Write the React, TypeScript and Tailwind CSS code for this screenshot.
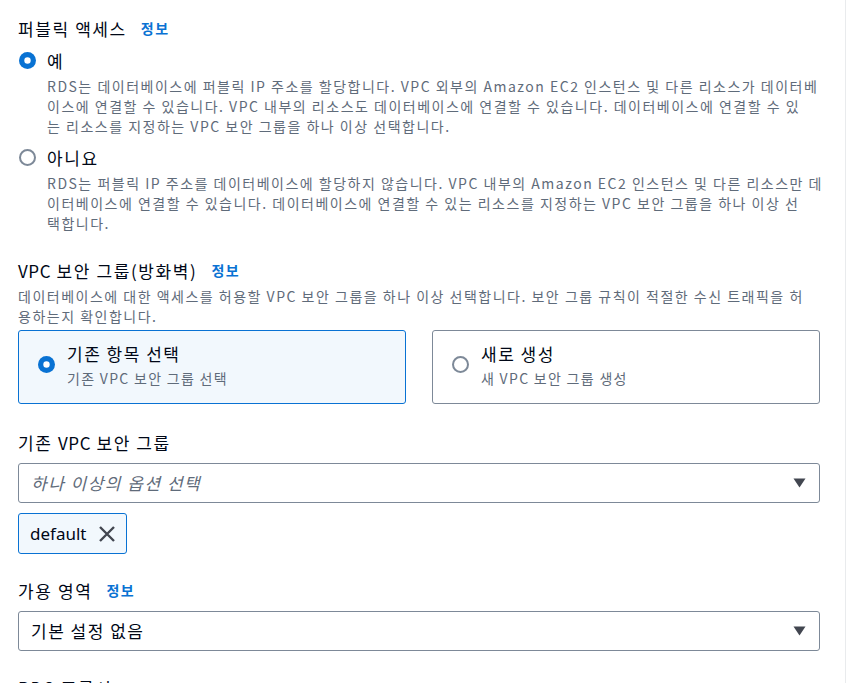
import React from "react";

const Radio = ({ checked }: { checked?: boolean }) =>
  checked ? (
    <svg width="17" height="17" viewBox="0 0 17 17" className="shrink-0">
      <circle cx="8.5" cy="8.5" r="8.5" fill="#0972d3" />
      <circle cx="8.5" cy="8.5" r="3.2" fill="#ffffff" />
    </svg>
  ) : (
    <svg width="17" height="17" viewBox="0 0 17 17" className="shrink-0">
      <circle cx="8.5" cy="8.5" r="7.5" fill="#ffffff" stroke="#7d8998" strokeWidth="2" />
    </svg>
  );

const Label = ({ children, info }: { children: React.ReactNode; info?: boolean }) => (
  <div className="flex items-center gap-[14px] h-[25px]">
    <span className="text-[17px] tracking-[1.6px] text-[#000716]">{children}</span>
    {info && <span className="text-[14px] tracking-[1.5px] font-bold text-[#0972d3]">정보</span>}
  </div>
);

const Caret = () => (
  <svg width="13" height="10" viewBox="0 0 13 10" className="shrink-0">
    <path d="M0.5 0.5 L12.5 0.5 L6.5 9.5 Z" fill="#424650" />
  </svg>
);

const Desc = ({ lines, className = "" }: { lines: string[]; className?: string }) => (
  <div className={"text-[14px] leading-[20px] tracking-[1.5px] text-[#5f6b7a] " + className}>
    {lines.map((l, i) => (
      <div key={i} className="whitespace-nowrap">
        {l}
      </div>
    ))}
  </div>
);

export default function App() {
  return (
    <div className="w-[848px] h-[683px] overflow-hidden bg-white font-['Noto_Sans_CJK_KR',sans-serif]">
      <div className="w-[846px] h-full border-r border-[#e9ebed] pl-[18px] pr-[25px] pt-[16px]">
        <Label info>퍼블릭 액세스</Label>

        <div className="flex gap-[11px] mt-[7px] pl-[1px]">
          <div className="mt-[4px]">
            <Radio checked />
          </div>
          <div>
            <div className="text-[17px] leading-[26px] text-[#000716]">예</div>
            <Desc
              className="mt-[2px]"
              lines={[
                "RDS는 데이터베이스에 퍼블릭 IP 주소를 할당합니다. VPC 외부의 Amazon EC2 인스턴스 및 다른 리소스가 데이터베",
                "이스에 연결할 수 있습니다. VPC 내부의 리소스도 데이터베이스에 연결할 수 있습니다. 데이터베이스에 연결할 수 있",
                "는 리소스를 지정하는 VPC 보안 그룹을 하나 이상 선택합니다.",
              ]}
            />
          </div>
        </div>

        <div className="flex gap-[11px] mt-[9px] pl-[1px]">
          <div className="mt-[4px]">
            <Radio />
          </div>
          <div>
            <div className="text-[17px] leading-[26px] tracking-[1.6px] text-[#000716]">아니요</div>
            <Desc
              className="mt-[2px]"
              lines={[
                "RDS는 퍼블릭 IP 주소를 데이터베이스에 할당하지 않습니다. VPC 내부의 Amazon EC2 인스턴스 및 다른 리소스만 데",
                "이터베이스에 연결할 수 있습니다. 데이터베이스에 연결할 수 있는 리소스를 지정하는 VPC 보안 그룹을 하나 이상 선",
                "택합니다.",
              ]}
            />
          </div>
        </div>

        <div className="mt-[25px]">
          <Label info>
            <span className="tracking-[0.6px]">VPC</span> 보안 그룹(방화벽)
          </Label>
          <Desc
            className="mt-[3px]"
            lines={[
              "데이터베이스에 대한 액세스를 허용할 VPC 보안 그룹을 하나 이상 선택합니다. 보안 그룹 규칙이 적절한 수신 트래픽을 허",
              "용하는지 확인합니다.",
            ]}
          />
        </div>

        <div className="grid grid-cols-2 gap-[26px] mt-[4px]">
          <div className="h-[74px] rounded-[3px] border border-[#0972d3] bg-[#f2f8fd] pl-[19px] pt-[10px] flex gap-[12px]">
            <div className="mt-[15px]">
              <Radio checked />
            </div>
            <div>
              <div className="text-[17px] leading-[25px] tracking-[1.5px] text-[#000716]">기존 항목 선택</div>
              <div className="text-[14px] leading-[20px] tracking-[1.3px] text-[#5f6b7a] mt-[2px]">기존 VPC 보안 그룹 선택</div>
            </div>
          </div>
          <div className="h-[74px] rounded-[3px] border border-[#7d8998] bg-white pl-[19px] pt-[10px] flex gap-[12px]">
            <div className="mt-[15px]">
              <Radio />
            </div>
            <div>
              <div className="text-[17px] leading-[25px] tracking-[1.5px] text-[#000716]">새로 생성</div>
              <div className="text-[14px] leading-[20px] tracking-[1.3px] text-[#5f6b7a] mt-[2px]">새 VPC 보안 그룹 생성</div>
            </div>
          </div>
        </div>

        <div className="mt-[26px]">
          <Label>
            기존 <span className="tracking-[0.6px]">VPC</span> 보안 그룹
          </Label>
        </div>
        <div className="mt-[8px] h-[40px] rounded-[3px] border border-[#7d8998] flex items-center justify-between pl-[12px] pr-[13px]">
          <span className="text-[17px] italic tracking-[1.5px] text-[#5f6b7a]">하나 이상의 옵션 선택</span>
          <Caret />
        </div>
        <div className="mt-[10px] inline-flex h-[41px] items-center gap-[12px] rounded-[3px] border border-[#0972d3] bg-[#f2f8fd] pl-[11px] pr-[10px]">
          <span className="text-[17px] text-[#000716] font-['Noto_Sans',sans-serif]">default</span>
          <svg width="18" height="18" viewBox="0 0 18 18">
            <path d="M2 2 L16 16 M16 2 L2 16" stroke="#424650" strokeWidth="2.4" fill="none" />
          </svg>
        </div>

        <div className="mt-[24px]">
          <Label info>가용 영역</Label>
        </div>
        <div className="mt-[8px] h-[40px] rounded-[3px] border border-[#7d8998] flex items-center justify-between pl-[12px] pr-[13px]">
          <span className="text-[17px] tracking-[1.5px] text-[#000716]">기본 설정 없음</span>
          <Caret />
        </div>

        <div className="mt-[24px]">
          <Label>RDS 프록시</Label>
        </div>
      </div>
    </div>
  );
}
